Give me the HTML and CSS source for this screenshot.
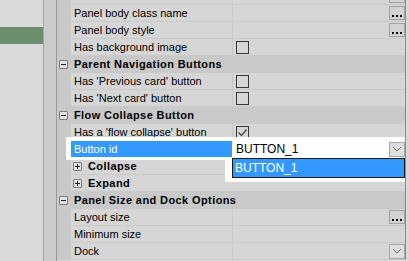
FILE: index.html
```html
<!DOCTYPE html>
<html lang="en">
<head>
  <meta charset="UTF-8">
  <title>Properties</title>
  <link rel="stylesheet" href="styles.css">
</head>
<body>

  <div class="sidebar"><div class="sidebar-item"></div></div>
  <div class="splitter"></div>

  <div class="grid">
    <div class="row"><div class="gutter"></div><div class="name"></div><div class="value"><span class="dots"></span></div></div>
    <div class="row"><div class="gutter"></div><div class="name">Panel body class name</div><div class="value"><span class="dots"></span></div></div>
    <div class="row"><div class="gutter"></div><div class="name">Panel body style</div><div class="value"><span class="dots"></span></div></div>
    <div class="row"><div class="gutter"></div><div class="name">Has background image</div><div class="value"><span class="check"></span></div></div>

    <div class="row cat"><div class="gutter"><span class="toggle minus"></span></div><div class="title">Parent Navigation Buttons</div></div>
    <div class="row"><div class="gutter"></div><div class="name">Has 'Previous card' button</div><div class="value"><span class="check"></span></div></div>
    <div class="row"><div class="gutter"></div><div class="name">Has 'Next card' button</div><div class="value"><span class="check"></span></div></div>

    <div class="row cat"><div class="gutter"><span class="toggle minus"></span></div><div class="title">Flow Collapse Button</div></div>
    <div class="row"><div class="gutter"></div><div class="name">Has a 'flow collapse' button</div><div class="value"><span class="check">
      <svg width="11" height="11" viewBox="0 0 11 11"><polyline points="1.5,5.5 4.5,8.5 9.5,2.5" fill="none" stroke="#4a4a4a" stroke-width="1.3"/></svg>
    </span></div></div>
    <div class="row selected">
      <div class="gutter"></div>
      <div class="name">Button id</div>
      <div class="value">BUTTON_1<span class="drop">
        <svg width="10" height="6" viewBox="0 0 10 6"><polyline points="1,1 5,5 9,1" fill="none" stroke="#6a6a6a" stroke-width="1"/></svg>
      </span></div>
      <div class="popup"><div class="popup-item">BUTTON_1</div></div>
    </div>
    <div class="row sub"><div class="gutter"></div><div class="title"><span class="toggle plus"></span>Collapse</div></div>
    <div class="row sub"><div class="gutter"></div><div class="title"><span class="toggle plus"></span>Expand</div></div>

    <div class="row cat"><div class="gutter"><span class="toggle minus"></span></div><div class="title">Panel Size and Dock Options</div></div>
    <div class="row"><div class="gutter"></div><div class="name">Layout size</div><div class="value"><span class="dots"></span></div></div>
    <div class="row"><div class="gutter"></div><div class="name">Minimum size</div><div class="value"></div></div>
    <div class="row"><div class="gutter"></div><div class="name">Dock</div><div class="value"><span class="drop">
      <svg width="10" height="6" viewBox="0 0 10 6"><polyline points="1,1 5,5 9,1" fill="none" stroke="#6a6a6a" stroke-width="1"/></svg>
    </span></div></div>
  </div>

  <div class="edge"></div>

</body>
</html>
```

FILE: styles.css
```css
body {
  margin: 0;
  width: 409px;
  height: 261px;
  overflow: hidden;
  display: flex;
  background: #d9d9d9;
  font-family: "Liberation Sans", Arial, sans-serif;
  font-size: 11px;
  color: #000;
}
.sidebar {
  width: 43px;
  flex: none;
  background: #d9d9d9;
  border-right: 1px solid #a4a4a4;
  padding-top: 27px;
}
.sidebar-item {
  height: 17px;
  background: #6b8f6e;
}
.splitter {
  width: 12px;
  flex: none;
  background: #cbcbcb;
  border-right: 1px solid #999;
}
.grid {
  width: 348px;
  flex: none;
  margin-top: -12px;
  display: flex;
  flex-direction: column;
  gap: 1px;
  background: #c9c9c9;
  border-right: 1px solid #8c8c8c;
  border-bottom: 1px solid #c9c9c9;
  align-self: flex-start;
}
.edge {
  flex: 1;
  background: #d9d9d9;
}
.row {
  height: 16px;
  display: flex;
  flex: none;
  line-height: 16px;
}
.gutter {
  width: 14px;
  flex: none;
  display: flex;
  align-items: center;
}
.name {
  width: 158px;
  padding-left: 3px;
  background: #d6d6d6;
  white-space: nowrap;
  overflow: hidden;
}
.value {
  width: 169px;
  margin-left: 1px;
  padding-left: 3px;
  background: #d6d6d6;
  display: flex;
  align-items: center;
  justify-content: space-between;
}
.title {
  flex: 1;
  padding-left: 3px;
  font-weight: bold;
  letter-spacing: 0.4px;
  display: flex;
  align-items: center;
}
.sub .title {
  background: #d6d6d6;
  padding-left: 2px;
}
.toggle {
  width: 7px;
  height: 7px;
  border: 1px solid #7c7c7c;
  border-radius: 1px;
  background: #e2e2e2;
  position: relative;
  flex: none;
}
.minus {
  margin-left: 2px;
}
.plus {
  margin-right: 6px;
}
.toggle::before {
  content: "";
  position: absolute;
  left: 1px;
  top: 3px;
  width: 5px;
  height: 1px;
  background: #222;
}
.plus::after {
  content: "";
  position: absolute;
  left: 3px;
  top: 1px;
  width: 1px;
  height: 5px;
  background: #222;
}
.check {
  width: 11px;
  height: 11px;
  border: 1px solid #383838;
  display: flex;
}
.dots {
  width: 16px;
  height: 14px;
  margin-left: auto;
  box-sizing: border-box;
  border: 1px solid #a2a2a2;
  background: #d3d3d3;
  display: flex;
  justify-content: center;
  align-items: flex-end;
  padding-bottom: 2px;
}
.dots::after {
  content: "";
  width: 2px;
  height: 2px;
  margin-right: 8px;
  background: #000;
  box-shadow: 4px 0 #000, 8px 0 #000;
}
.drop {
  width: 16px;
  height: 15px;
  margin-left: auto;
  box-sizing: border-box;
  border: 1px solid #a6a6a6;
  background: #dedede;
  display: flex;
  align-items: center;
  justify-content: center;
}
.selected {
  position: relative;
  z-index: 1;
}
.selected::before {
  content: "";
  position: absolute;
  top: -4px;
  left: 9px;
  right: 0;
  bottom: -3px;
  background: #fff;
  z-index: -1;
}
.selected .name {
  background: #3399ff;
  color: #fff;
}
.selected .value {
  background: #fff;
  font-size: 12px;
}
.popup {
  position: absolute;
  top: 17px;
  left: 168px;
  right: 0;
  height: 24px;
  background: #fff;
}
.popup-item {
  margin-left: 7px;
  height: 20px;
  box-sizing: border-box;
  border: 1px solid #1a1a1a;
  background: #3399ff;
  color: #fff;
  padding-left: 2px;
  line-height: 18px;
  font-size: 12px;
}
```
